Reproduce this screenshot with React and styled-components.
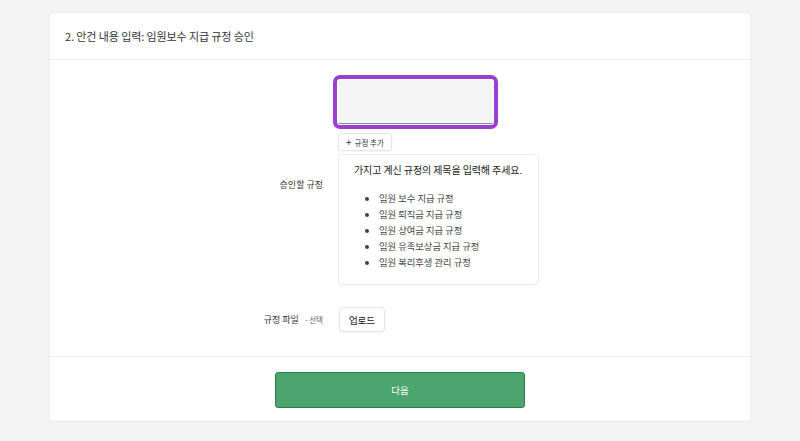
import React from "react";
import styled, { createGlobalStyle } from "styled-components";

const GlobalStyle = createGlobalStyle`
  body {
    margin: 0;
    background: #f4f4f4;
    font-family: "Noto Sans CJK KR", "Noto Sans", sans-serif;
  }
`;

const Page = styled.div`
  width: 800px;
  height: 441px;
  padding-top: 12px;
  box-sizing: border-box;
`;

const Card = styled.div`
  width: 702px;
  margin-left: 49px;
  background: #fff;
  border: 1px solid #ebebeb;
  border-radius: 4px;
  box-sizing: border-box;
`;

const Header = styled.div`
  height: 46px;
  padding-left: 15px;
  display: flex;
  align-items: center;
  font-size: 11px;
  letter-spacing: -0.1px;
  color: #333;
  border-bottom: 1px solid #efefef;
`;

const Body = styled.div`
  padding: 16px 0 24px;
  display: flex;
  flex-direction: column;
  gap: 22px;
  border-bottom: 1px solid #efefef;
`;

const Row = styled.div`
  display: grid;
  grid-template-columns: 273px 1fr;
  column-gap: 15px;
  align-items: center;
`;

const Label = styled.div`
  text-align: right;
  font-size: 9px;
  color: #333;
  margin-top: ${(p) => p.$shift || 0}px;
`;

const Optional = styled.span`
  font-size: 7.5px;
  color: #666;
  margin-left: 6px;
`;

const Field = styled.div`
  display: flex;
  flex-direction: column;
  align-items: flex-start;
`;

const TextArea = styled.textarea`
  width: 155px;
  height: 44px;
  margin-top: 4px;
  box-sizing: border-box;
  resize: none;
  background: #f5f5f5;
  border: none;
  border-bottom: 1px solid #8a8a8a;
  border-radius: 2px;
  outline: 4px solid #9b3fd1;
  outline-offset: 1px;
  font-family: inherit;
`;

const SmallButton = styled.button`
  margin-top: 9px;
  height: 18px;
  padding: 0 7px;
  display: flex;
  align-items: center;
  gap: 3px;
  font-family: inherit;
  font-size: 7.5px;
  color: #333;
  background: #fff;
  border: 1px solid #e6e6e6;
  border-radius: 3px;
  box-shadow: 0 1px 2px rgba(0, 0, 0, 0.05);
`;

const Plus = styled.span`
  font-size: 10px;
  line-height: 1;
`;

const InfoBox = styled.div`
  margin-top: 3px;
  width: 201px;
  height: 131px;
  box-sizing: border-box;
  padding: 6px 15px;
  border: 1px solid #ececec;
  border-radius: 4px;
  box-shadow: 0 1px 3px rgba(0, 0, 0, 0.03);
`;

const InfoTitle = styled.div`
  font-size: 10px;
  letter-spacing: -0.1px;
  white-space: nowrap;
  color: #222;
  line-height: 18px;
`;

const List = styled.ul`
  margin: 11px 0 0;
  padding-left: 25px;
  font-size: 9.3px;
  line-height: 16px;
  color: #444;
`;

const UploadButton = styled.button`
  width: 46px;
  height: 25px;
  margin-left: 1px;
  font-family: inherit;
  font-size: 9.5px;
  color: #222;
  background: #fff;
  border: 1px solid #e4e4e4;
  border-radius: 4px;
  box-shadow: 0 1px 2px rgba(0, 0, 0, 0.05);
`;

const Footer = styled.div`
  padding: 15px 0 13px;
  display: flex;
  justify-content: center;
`;

const NextButton = styled.button`
  width: 250px;
  height: 36px;
  font-family: inherit;
  font-size: 9.5px;
  color: #fff;
  background: #4ca56f;
  border: 1px solid #2f7d4f;
  border-radius: 3px;
`;

const rules = [
  "임원 보수 지급 규정",
  "임원 퇴직금 지급 규정",
  "임원 상여금 지급 규정",
  "임원 유족보상금 지급 규정",
  "임원 복리후생 관리 규정",
];

export default function App() {
  return (
    <Page>
      <GlobalStyle />
      <Card>
        <Header>2. 안건 내용 입력: 임원보수 지급 규정 승인</Header>
        <Body>
          <Row>
            <Label $shift={8}>승인할 규정</Label>
            <Field>
              <TextArea />
              <SmallButton>
                <Plus>+</Plus> 규정 추가
              </SmallButton>
              <InfoBox>
                <InfoTitle>가지고 계신 규정의 제목을 입력해 주세요.</InfoTitle>
                <List>
                  {rules.map((r) => (
                    <li key={r}>{r}</li>
                  ))}
                </List>
              </InfoBox>
            </Field>
          </Row>
          <Row>
            <Label>
              규정 파일<Optional>- 선택</Optional>
            </Label>
            <Field>
              <UploadButton>업로드</UploadButton>
            </Field>
          </Row>
        </Body>
        <Footer>
          <NextButton>다음</NextButton>
        </Footer>
      </Card>
    </Page>
  );
}
